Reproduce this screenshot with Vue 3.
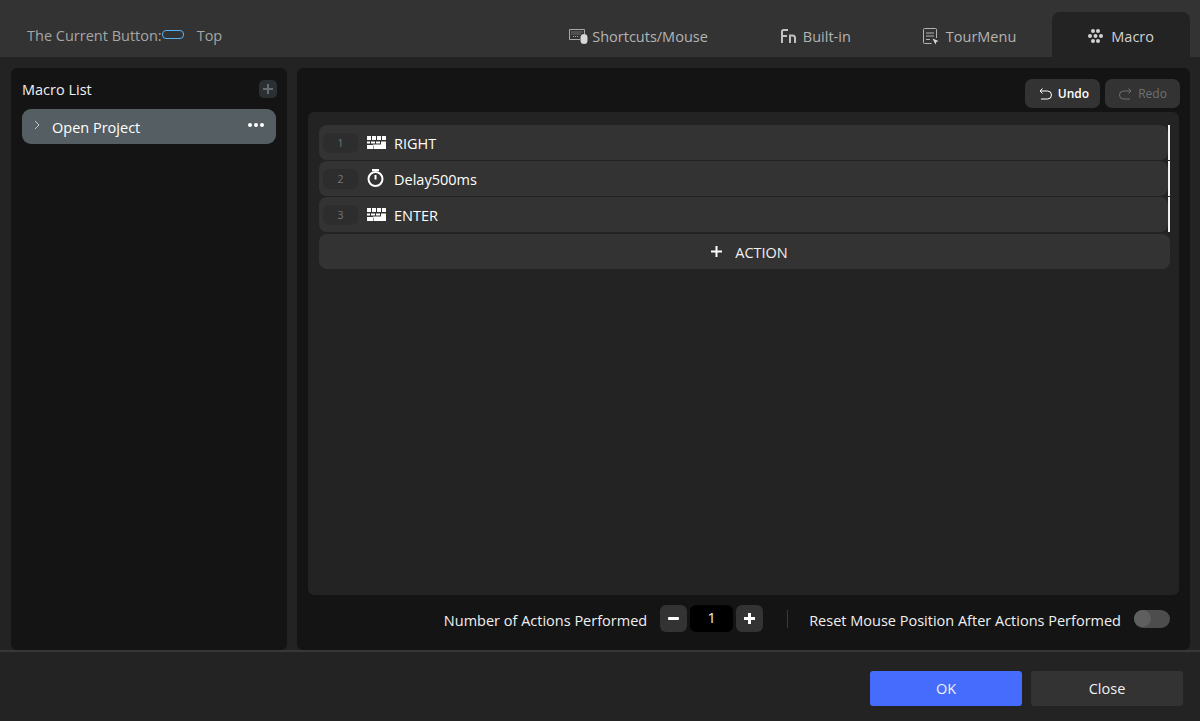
<template>
  <div class="dialog">
    <!-- header -->
    <div class="header">
      <div class="current">
        <span>The Current Button:</span>
        <span class="pill"></span>
        <span class="current-name">Top</span>
      </div>
      <div class="tabs">
        <div class="tab tab-shortcuts">
          <svg width="19" height="15" viewBox="0 0 19 15" fill="none">
            <path d="M11 10.500H.5V.5h15V5" stroke="#a8a8a8" />
            <path d="M2.500 3h11M2.500 5h9M4 7.500h6" stroke="#a8a8a8" stroke-dasharray="1 1" />
            <rect x="11.500" y="5" width="7" height="10" rx="3.500" fill="#d8d8d8" />
          </svg>
          <span>Shortcuts/Mouse</span>
        </div>
        <div class="tab tab-builtin">
          <svg width="16" height="14" viewBox="0 0 16 14" fill="none" stroke="#c0c0c0" stroke-width="2">
            <path d="M2 14V2.500Q2 1 3.500 1H8M2 7h5" />
            <path d="M10 14V6.500h2.500Q15 6.500 15 9v5" />
          </svg>
          <span>Built-in</span>
        </div>
        <div class="tab tab-tour">
          <svg width="16" height="17" viewBox="0 0 16 17" fill="none" stroke="#b4b4b4">
            <path d="M8.500 15.500H1.500q-1 0-1-1v-13q0-1 1-1h11q1 0 1 1V10" />
            <path d="M3 5h8M3 8h8M3 11.500h4" />
            <path d="M9.500 10.500l6 2.500-2.200 1-.8 2.500z" fill="#d8d8d8" stroke="none" />
          </svg>
          <span>TourMenu</span>
        </div>
        <div class="tab tab-macro active">
          <svg width="15" height="14" viewBox="0 0 15 14" fill="#d2d2d2">
            <circle cx="5" cy="2" r="2" /><circle cx="10" cy="2" r="2" />
            <circle cx="2" cy="7" r="2" /><circle cx="7.500" cy="7" r="2" /><circle cx="13" cy="7" r="2" />
            <circle cx="5" cy="12" r="2" /><circle cx="10" cy="12" r="2" />
          </svg>
          <span>Macro</span>
        </div>
      </div>
    </div>

    <!-- main -->
    <div class="main">
      <div class="side">
        <div class="side-title">
          <span>Macro List</span>
          <div class="add-macro">
            <svg width="12" height="12" viewBox="0 0 12 12" stroke="#666d71" stroke-width="2"><path d="M6 1v10M1 6h10" /></svg>
          </div>
        </div>
        <div class="macro-item">
          <svg class="chev" width="6" height="10" viewBox="0 0 6 10" fill="none" stroke="#c4c8ca"><path d="M1 1l4 4-4 4" /></svg>
          <span class="macro-name">Open Project</span>
          <div class="dots"><i></i><i></i><i></i></div>
        </div>
      </div>

      <div class="content">
        <div class="toolbar">
          <div class="tool-btn">
            <svg width="13" height="12" viewBox="0 0 13 12" fill="none" stroke="#fff"><path d="M3.500.5L1 3l2.500 2.500M1 3h7.500a4 4 0 0 1 0 8H2" /></svg>
            <span class="tool-label">Undo</span>
          </div>
          <div class="tool-btn disabled">
            <svg width="13" height="12" viewBox="0 0 13 12" fill="none" stroke="#707070"><path d="M9.500.5L12 3 9.500 5.500M12 3H4.500a4 4 0 0 0 0 8H11" /></svg>
            <span class="tool-label">Redo</span>
          </div>
        </div>

        <div class="editor">
          <div class="rows">
            <div v-for="a in actions" :key="a.n" class="row-wrap">
              <div class="row">
                <div class="row-num">{{ a.n }}</div>
                <svg v-if="a.type === 'key'" class="row-icon" width="19" height="13" viewBox="0 0 19 13" fill="#fff">
                  <path d="M0 0h4v4H0zM5 0h4v4H5zM10 0h4v4h-4zM15 0h4v4h-4z" />
                  <path d="M0 5.500h3v2H0zM4 5.500h4v2H4zM9 5.500h4v2H9zM14 5.500h5V13H7v-3.500h-.5V13H0V9h6v-.5h8z" />
                </svg>
                <svg v-else class="row-icon timer" width="17" height="18" viewBox="0 0 17 18" fill="none" stroke="#fff" stroke-width="2">
                  <circle cx="8.500" cy="10" r="7" />
                  <path d="M5 1h7M8.500 6v4.500" />
                </svg>
                <span class="row-text">{{ a.text }}</span>
              </div>
            </div>
          </div>
          <div class="add-action">
            <svg width="11" height="11" viewBox="0 0 11 11" stroke="#fff" stroke-width="2"><path d="M5.500 0v11M0 5.500h11" /></svg>
            <span class="add-label">ACTION</span>
          </div>
        </div>

        <div class="options">
          <span class="opt-label">Number of Actions Performed</span>
          <div class="stepper">
            <div class="step">
              <svg width="11" height="3" viewBox="0 0 11 3" fill="#fff"><rect width="11" height="3" rx="1" /></svg>
            </div>
            <div class="step-value">1</div>
            <div class="step">
              <svg width="11" height="11" viewBox="0 0 11 11" stroke="#fff" stroke-width="3"><path d="M5.500 0v11M0 5.500h11" /></svg>
            </div>
          </div>
          <div class="divider"></div>
          <span class="opt-label">Reset Mouse Position After Actions Performed</span>
          <div class="switch"><div class="knob"></div></div>
        </div>
      </div>
    </div>

    <!-- footer -->
    <div class="footer">
      <div class="btn primary">OK</div>
      <div class="btn">Close</div>
    </div>
  </div>
</template>

<script setup>
const actions = [
  { n: 1, type: 'key', text: 'RIGHT' },
  { n: 2, type: 'delay', text: 'Delay500ms' },
  { n: 3, type: 'key', text: 'ENTER' }
]
</script>

<style scoped>
.dialog {
  width: 1200px;
  height: 721px;
  display: flex;
  flex-direction: column;
  background: #232323;
  color: #f0f0f0;
  font-family: "Open Sans", "Noto Sans", sans-serif;
  font-size: 14.5px;
  overflow: hidden;
}

.header {
  height: 57px;
  flex: none;
  background: #333;
  display: flex;
  justify-content: space-between;
  align-items: flex-end;
  padding: 0 10px 0 27px;
}
.current {
  height: 44px;
  padding-top: 1px;
  box-sizing: border-box;
  display: flex;
  align-items: center;
  color: #a6a6a6;
}
.pill {
  width: 20px;
  height: 7px;
  margin-left: 0;
  margin-top: -3px;
  border: 1px solid #58aef0;
  border-radius: 4px;
}
.current-name {
  margin-left: 13px;
}

.tabs {
  display: flex;
  height: 45px;
}
.tab {
  display: flex;
  align-items: center;
  padding: 3px 36px 0;
  box-sizing: border-box;
  color: #b4b4b4;
}
.tab-shortcuts { gap: 4px; }
.tab-builtin { gap: 7px; }
.tab-tour { gap: 7px; }
.tab-macro { gap: 8px; }
.tab.active {
  background: #232323;
  border-radius: 8px 8px 0 0;
  color: #d2d2d2;
}

.main {
  flex: 1;
  display: flex;
  gap: 10px;
  padding: 11px 10px 0 11px;
  min-height: 0;
}

.side {
  width: 276px;
  height: 582px;
  flex: none;
  box-sizing: border-box;
  padding: 11px 11px 0;
  background: #141414;
  border-radius: 6px;
}
.side-title {
  display: flex;
  align-items: center;
  justify-content: space-between;
  width: 255px;
  height: 20px;
  margin-bottom: 10px;
}
.add-macro {
  width: 18px;
  height: 18px;
  border-radius: 5px;
  background: #2a2f31;
  display: flex;
  align-items: center;
  justify-content: center;
}
.macro-item {
  height: 35px;
  width: 254px;
  border-radius: 9px;
  background: #555f63;
  display: flex;
  align-items: center;
  padding: 0 12px;
  box-sizing: border-box;
}
.chev {
  margin-top: -4px;
}
.macro-name {
  margin-left: 12px;
  margin-top: 1px;
  flex: 1;
  color: #fff;
}
.dots {
  display: flex;
  gap: 2px;
  margin-top: -3px;
}
.dots i {
  width: 4px;
  height: 4px;
  border-radius: 50%;
  background: #fff;
}

.content {
  width: 893px;
  height: 582px;
  flex: none;
  box-sizing: border-box;
  background: #141414;
  border-radius: 6px;
  padding: 11px 11px 0;
  display: flex;
  flex-direction: column;
}
.toolbar {
  height: 29px;
  width: 872px;
  margin-bottom: 4px;
  flex: none;
  display: flex;
  justify-content: flex-end;
  gap: 5px;
}
.tool-btn {
  width: 75px;
  height: 29px;
  padding-left: 3px;
  box-sizing: border-box;
  border-radius: 7px;
  background: #333;
  display: flex;
  align-items: center;
  justify-content: center;
  gap: 6px;
  color: #fff;
  font-size: 12px;
}
.tool-btn.disabled {
  padding-left: 1px;
  color: #707070;
}
.tool-label {
  font-weight: 600;
}
.tool-btn.disabled .tool-label {
  font-weight: 400;
}

.editor {
  height: 483px;
  flex: none;
  background: #232323;
  border-radius: 6px;
  padding: 13px 0 0 11px;
  box-sizing: border-box;
}
.rows {
  display: flex;
  flex-direction: column;
  gap: 1px;
  width: 851px;
}
.row-wrap {
  border-right: 2px solid #f0f0f0;
}
.row {
  height: 35px;
  background: #333;
  border-radius: 8px;
  display: flex;
  align-items: center;
  padding-left: 4px;
}
.row-num {
  width: 35px;
  height: 20px;
  border-radius: 6px;
  background: #2d2d2d;
  color: #777;
  font-size: 10.5px;
  line-height: 21px;
  text-align: center;
  margin-top: 1px;
}
.row-icon {
  margin-left: 9px;
  margin-top: -1px;
}
.row-icon.timer {
  margin-right: 2px;
  margin-top: -1px;
}
.row-text {
  margin-left: 8px;
  margin-top: 2px;
  color: #fff;
}
.add-action {
  width: 851px;
  height: 35px;
  margin-top: 2px;
  padding-left: 10px;
  box-sizing: border-box;
  border-radius: 8px;
  background: #333;
  display: flex;
  align-items: center;
  justify-content: center;
  gap: 13px;
  color: #f0f0f0;
}
.add-label {
  margin-top: 2px;
}

.options {
  flex: 1;
  display: flex;
  align-items: center;
  justify-content: flex-end;
  padding: 0 9px 8px 0;
}
.opt-label {
  margin-top: 4px;
}
.stepper {
  display: flex;
  align-items: center;
  margin-left: 13px;
  gap: 3px;
}
.step {
  width: 27px;
  height: 27px;
  border-radius: 6px;
  background: #333;
  display: flex;
  align-items: center;
  justify-content: center;
}
.step-value {
  width: 43px;
  height: 27px;
  border-radius: 6px;
  background: #000;
  color: #f0f0f0;
  line-height: 25px;
  text-align: center;
}
.divider {
  width: 1px;
  height: 18px;
  background: #3a3a3a;
  margin: 0 21px 0 24px;
}
.switch {
  width: 36px;
  height: 18px;
  margin-left: 13px;
  border-radius: 9px;
  background: #4d4d4d;
}
.knob {
  width: 17px;
  height: 17px;
  border-radius: 50%;
  background: #5f5f5f;
}

.footer {
  height: 71px;
  flex: none;
  border-top: 2px solid #373737;
  box-sizing: border-box;
  display: flex;
  justify-content: flex-end;
  gap: 9px;
  padding: 19px 17px 0 0;
}
.btn {
  width: 152px;
  height: 35px;
  border-radius: 3px;
  background: #333;
  color: #f0f0f0;
  line-height: 36px;
  text-align: center;
}
.btn.primary {
  background: #456cfc;
}
</style>
